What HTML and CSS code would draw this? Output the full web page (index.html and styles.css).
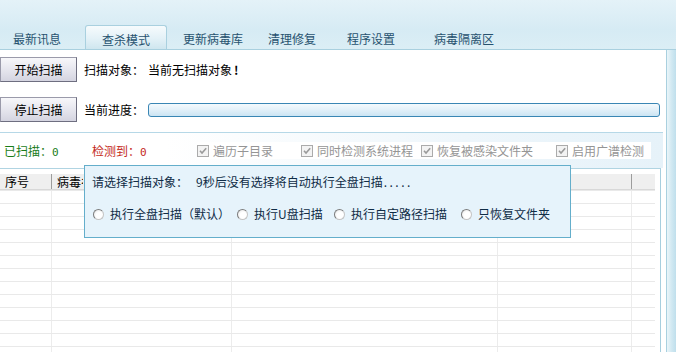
FILE: index.html
```html
<!DOCTYPE html>
<html lang="zh-CN">
<head>
<meta charset="utf-8">
<title>查杀模式</title>
<link rel="stylesheet" href="styles.css">
</head>
<body>
<div class="window">
  <div class="tabbar">
    <div class="tab">最新讯息</div>
    <div class="tab active">查杀模式</div>
    <div class="tab t3">更新病毒库</div>
    <div class="tab t4">清理修复</div>
    <div class="tab t5">程序设置</div>
    <div class="tab t6">病毒隔离区</div>
  </div>
  <div class="main">
    <div class="content">
      <div class="row first">
        <div class="btn">开始扫描</div>
        <span class="label">扫描对象：</span>
        <span>当前无扫描对象<b class="bang">!</b></span>
      </div>
      <div class="row second">
        <div class="btn">停止扫描</div>
        <span class="label">当前进度：</span>
        <div class="progress"></div>
      </div>
      <div class="sep"></div>
      <div class="status">
        <span class="st st-scanned">已扫描：<b class="num">0</b></span>
        <span class="st st-found">检测到：<b class="num">0</b></span>
        <label class="cb cb1"><span class="box"><svg viewBox="0 0 10 10" width="10" height="10"><path d="M2 4.8 L4 7 L8.2 2.2" fill="none" stroke="#9a9a9a" stroke-width="1.6"/></svg></span><span class="cbt">遍历子目录</span></label>
        <label class="cb cb2"><span class="box"><svg viewBox="0 0 10 10" width="10" height="10"><path d="M2 4.8 L4 7 L8.2 2.2" fill="none" stroke="#9a9a9a" stroke-width="1.6"/></svg></span><span class="cbt">同时检测系统进程</span></label>
        <label class="cb cb3"><span class="box"><svg viewBox="0 0 10 10" width="10" height="10"><path d="M2 4.8 L4 7 L8.2 2.2" fill="none" stroke="#9a9a9a" stroke-width="1.6"/></svg></span><span class="cbt">恢复被感染文件夹</span></label>
        <label class="cb cb4"><span class="box"><svg viewBox="0 0 10 10" width="10" height="10"><path d="M2 4.8 L4 7 L8.2 2.2" fill="none" stroke="#9a9a9a" stroke-width="1.6"/></svg></span><span class="cbt">启用广谱检测</span></label>
      </div>
      <div class="list">
        <div class="lhead">
          <div class="c c1">序号</div>
          <div class="c c2"><span class="clip">病毒名称</span></div>
          <div class="c c3"></div>
          <div class="c c4"></div>
          <div class="c c5"></div>
        </div>
        <div class="lrow"><div class="c c1"></div><div class="c c2"></div><div class="c c3"></div><div class="c c4"></div><div class="c c5"></div></div>
        <div class="lrow"><div class="c c1"></div><div class="c c2"></div><div class="c c3"></div><div class="c c4"></div><div class="c c5"></div></div>
        <div class="lrow"><div class="c c1"></div><div class="c c2"></div><div class="c c3"></div><div class="c c4"></div><div class="c c5"></div></div>
        <div class="lrow"><div class="c c1"></div><div class="c c2"></div><div class="c c3"></div><div class="c c4"></div><div class="c c5"></div></div>
        <div class="lrow"><div class="c c1"></div><div class="c c2"></div><div class="c c3"></div><div class="c c4"></div><div class="c c5"></div></div>
        <div class="lrow"><div class="c c1"></div><div class="c c2"></div><div class="c c3"></div><div class="c c4"></div><div class="c c5"></div></div>
        <div class="lrow"><div class="c c1"></div><div class="c c2"></div><div class="c c3"></div><div class="c c4"></div><div class="c c5"></div></div>
        <div class="lrow"><div class="c c1"></div><div class="c c2"></div><div class="c c3"></div><div class="c c4"></div><div class="c c5"></div></div>
        <div class="lrow"><div class="c c1"></div><div class="c c2"></div><div class="c c3"></div><div class="c c4"></div><div class="c c5"></div></div>
        <div class="lrow"><div class="c c1"></div><div class="c c2"></div><div class="c c3"></div><div class="c c4"></div><div class="c c5"></div></div>
        <div class="lrow"><div class="c c1"></div><div class="c c2"></div><div class="c c3"></div><div class="c c4"></div><div class="c c5"></div></div>
        <div class="lrow"><div class="c c1"></div><div class="c c2"></div><div class="c c3"></div><div class="c c4"></div><div class="c c5"></div></div>
        <div class="lrow"><div class="c c1"></div><div class="c c2"></div><div class="c c3"></div><div class="c c4"></div><div class="c c5"></div></div>
      </div>
      <div class="dialog">
        <div class="dtitle"><span class="dq">请选择扫描对象：</span><span>9秒后没有选择将自动执行全盘扫描<span class="dots">.....</span></span></div>
        <div class="dradios">
          <label class="ri r1"><span class="radio"></span>执行全盘扫描（默认）</label>
          <label class="ri r2"><span class="radio"></span>执行U盘扫描</label>
          <label class="ri r3"><span class="radio"></span>执行自定路径扫描</label>
          <label class="ri r4"><span class="radio"></span>只恢复文件夹</label>
        </div>
      </div>
    </div>
    <div class="edge"></div>
  </div>
</div>
</body>
</html>
```

FILE: styles.css
```css
* { box-sizing: border-box; }
html, body { margin: 0; padding: 0; }
body {
  width: 676px;
  height: 352px;
  overflow: hidden;
  font-family: "Noto Sans CJK SC", "Liberation Sans", sans-serif;
  font-size: 12px;
  color: #000;
  background: #fff;
}
.window {
  display: flex;
  flex-direction: column;
  height: 352px;
}
.tabbar {
  height: 50px;
  flex: none;
  display: flex;
  align-items: flex-end;
  padding-left: 13px;
  background: linear-gradient(#e4f2f8, #d6ebf4 60%, #dbeef5);
  border-bottom: 1px solid #a9d0df;
}
.tab {
  height: 24px;
  display: flex;
  align-items: center;
  padding-top: 4px;
  color: #27526f;
  white-space: nowrap;
  line-height: 16px;
}
.tab.active {
  margin-left: 24px;
  padding: 4px 16px 0;
  border: 1px solid #a9d0df;
  border-bottom: none;
  border-radius: 3px 3px 0 0;
  background: linear-gradient(#f6fbfd, #e3f1f7 55%, #cfe6ef);
}
.tab.t3 { margin-left: 16px; }
.tab.t4 { margin-left: 25px; }
.tab.t5 { margin-left: 31px; }
.tab.t6 { margin-left: 39px; }

.main {
  flex: 1;
  display: flex;
  min-height: 0;
}
.content {
  flex: 1;
  position: relative;
  background: #fff;
  border-right: 1px solid #a9d0df;
  display: flex;
  flex-direction: column;
  overflow: hidden;
}
.edge {
  width: 9px;
  flex: none;
  background: linear-gradient(to right, #eaf5f9, #d2e9f2 50%, #bfdfec);
}

.row {
  display: flex;
  align-items: center;
  height: 25px;
  flex: none;
  white-space: nowrap;
}
.row.first { margin-top: 7px; }
.row.second { margin-top: 15px; }
.bang { font-weight: bold; margin-left: 2px; }
.btn {
  width: 77px;
  height: 25px;
  flex: none;
  display: flex;
  align-items: center;
  justify-content: center;
  border: 1px solid #8c8c9c;
  border-color: #9a9aaa #6e6e80 #6e6e80 #9a9aaa;
  background: linear-gradient(#f7f7fa, #e6e6ee 50%, #d4d4e0);
  margin-right: 7px;
  color: #000;
}
.label {
  width: 64px;
  flex: none;
}
.progress {
  flex: 1;
  height: 14px;
  margin-right: 6px;
  margin-top: 1px;
  border: 1px solid #3a86b4;
  border-radius: 3px;
  background: linear-gradient(#f4fafd, #e4f1f9 45%, #cbe4f3);
}
.sep {
  flex: none;
  margin-top: 10px;
  margin-right: 3px;
  border-top: 1px solid #b6d8e7;
}
.status {
  flex: none;
  height: 35px;
  margin-right: 3px;
  display: flex;
  align-items: center;
  white-space: nowrap;
  background: linear-gradient(to right, #ffffff 25%, #eef6fb 70%, #e6f2f9);
}
.st { flex: none; }
.st-scanned { margin-left: 4px; width: 88px; color: #1a7d1a; }
.st-found { width: 105px; color: #c42a1c; }
.num {
  font-weight: normal;
  font-family: "DejaVu Sans Mono", monospace;
  font-size: 11px;
}
.cb {
  flex: none;
  display: flex;
  align-items: center;
  color: #959595;
  background: #fff;
}
.cb1 { width: 104px; }
.cb2 { width: 120px; }
.cb3 { width: 135px; }
.cb4 { width: 95px; }
.box {
  width: 12px;
  height: 12px;
  flex: none;
  border: 1px solid #ababab;
  background: #f3f3f3;
  display: flex;
  align-items: center;
  justify-content: center;
  margin-right: 4px;
}
.box svg { display: block; }

.list {
  flex: 1;
  margin-right: 5px;
  border-top: 1px solid #b0d4e2;
  border-right: 1px solid #a6cede;
  padding-top: 5px;
  overflow: hidden;
}
.lhead, .lrow {
  display: flex;
  margin-right: 5px;
}
.lhead {
  height: 16px;
  background: #efefef;
  border-bottom: 1px solid #d8d8d8;
}
.lhead .c {
  border-right: 1px solid #9c9c9c;
  padding-left: 5px;
  line-height: 15px;
  white-space: nowrap;
  overflow: hidden;
  color: #000;
}
.clip {
  display: inline-block;
  width: 26px;
  overflow: hidden;
  vertical-align: top;
}
.lrow {
  height: 13px;
  border-top: 1px solid #e9e9e9;
}
.lrow .c {
  border-right: 1px solid #ececec;
}
.c { flex: none; }
.c1 { width: 52px; }
.c2 { width: 180px; }
.c3 { width: 266px; }
.c4 { width: 134px; }
.c5 { flex: 1; border-right: none !important; }

.dialog {
  position: absolute;
  left: 84px;
  top: 115px;
  width: 487px;
  height: 73px;
  border: 1px solid #64aecb;
  background: #e6f3fb;
  color: #0f2c46;
  padding: 8px 0 0 7px;
  white-space: nowrap;
}
.dtitle {
  line-height: 16px;
  display: flex;
}
.dq { width: 104px; flex: none; }
.dots { letter-spacing: 2.5px; margin-left: 1px; }
.dradios {
  margin-top: 16px;
  display: flex;
  align-items: center;
  line-height: 16px;
}
.ri {
  display: flex;
  align-items: center;
  flex: none;
}
.r1 { margin-left: 1px; width: 144px; }
.r2 { width: 97px; }
.r3 { width: 127px; }
.radio {
  width: 11px;
  height: 11px;
  border-radius: 50%;
  border: 1px solid;
  border-color: #7c7c7c #c4c4c4 #c4c4c4 #7c7c7c;
  background: radial-gradient(circle at 60% 60%, #ffffff 40%, #e4e4e4);
  margin-right: 6px;
  flex: none;
}
```
